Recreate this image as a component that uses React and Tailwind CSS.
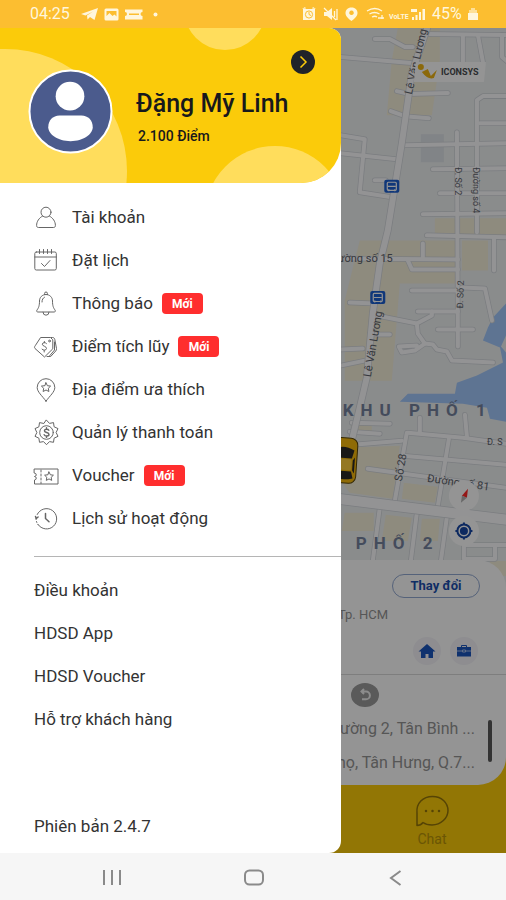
const strokeProps = { fill: 'none', stroke: 'currentColor', strokeLinecap: 'round', strokeLinejoin: 'round' };

function MenuIcon({ children }) {
  return (
    <svg viewBox="0 0 24 24" className="h-6 w-6 shrink-0 overflow-visible text-[#666]" strokeWidth="1" aria-hidden="true" {...strokeProps}>
      {children}
    </svg>
  );
}

const menuItems = [
  {
    label: 'Tài khoản',
    icon: (
      <>
        <circle cx="12" cy="6.2" r="5" />
        <path d="M8.6 10C5 12 2.6 15.500 2.600 19.500c0 1.300.6 2 2 2h14.800c1.400 0 2-.7 2-2 0-4-2.400-7.500-6-9.500" />
      </>
    ),
  },
  {
    label: 'Đặt lịch',
    icon: (
      <>
        <rect x=".8" y="3" width="21.500" height="18" rx="1.500" />
        <path d="M.8 8h21.500M5.500.5v4M9.500.5v4M13.500.5v4M17.500.5v4M7.500 14.500l3 3 5.500-6" />
      </>
    ),
  },
  {
    label: 'Thông báo',
    isNew: true,
    icon: (
      <>
        <path d="M12 2.500c-4 0-6.500 3-6.500 6.500 0 5-1 7-2.500 9-.7 1-.3 2 .8 2h16.400c1.100 0 1.500-1 .8-2-1.500-2-2.500-4-2.500-9 0-3.500-2.500-6.500-6.500-6.500z" />
        <path d="M10.600 2.600V1.400a1.400 1.400 0 0 1 2.800 0v1.200M9 20.200a3 3 0 0 0 6 0M8 10c0-2.500 1-4 2.500-4.800" />
      </>
    ),
  },
  {
    label: 'Điểm tích lũy',
    isNew: true,
    icon: (
      <>
        <path d="M7 2.500h9.500l2.300 2.300v9L10.500 22 1 13.500c-.7-.8-.7-1.600 0-2.500z" />
        <path d="M17 2.500h1.500c1.300 0 2 .7 2.300 2l1.700 9c.2 1-.2 1.800-.8 2.500l-5 5.500-3.700 0M20.500 7v8l-5 6" />
        <path d="M12.500 8.500c-1-1.300-4-1.300-4.200.7-.2 2 4.400 2 4.200 4.300-.2 2-3.500 2.200-4.500.7M10.400 6.500v1.200M10.200 15.500v1.500" />
        <circle cx="15.500" cy="6" r=".9" />
      </>
    ),
  },
  {
    label: 'Địa điểm ưa thích',
    icon: (
      <>
        <path d="M12 23.200C8 17.500 3.200 14 3.200 9.500a8.800 8.800 0 0 1 17.600 0c0 4.500-4.800 8-8.800 13.700z" />
        <path d="M12 4.800l1.400 2.900 3.200.4-2.300 2.200.6 3.200-2.900-1.500-2.900 1.500.6-3.200-2.300-2.200 3.200-.4z" />
      </>
    ),
  },
  {
    label: 'Quản lý thanh toán',
    icon: (
      <>
        <path d="M12.500-.8l3 3.200 4-.8.600 4.200 3.900 1.800-1.900 3.900L24 15.300l-3.900 1.900-.6 4.100-4-.7-3 3.100-3-3.100-4 .7-.6-4.100L1 15.300l1.900-3.800L1 7.600l3.900-1.800.6-4.200 4 .8z" />
        <circle cx="12.500" cy="11.500" r="6.800" />
        <path strokeWidth="1.400" d="M14.800 9.300c-.7-1.500-4.400-1.500-4.400.5 0 2.200 4.600 1.200 4.600 3.600 0 2-4 2.100-4.800.3M12.500 6.800V8M12.500 15v1.400" />
      </>
    ),
  },
  {
    label: 'Voucher',
    isNew: true,
    icon: (
      <>
        <path d="M.5 5h23.500v15H.5v-4a2 2 0 0 0 1.800-2A2 2 0 0 0 .5 12.500 2 2 0 0 0 2.300 11 2 2 0 0 0 .5 9z" />
        <path strokeDasharray="2 2" d="M7 6v13.500" />
        <path d="M15 8l1.400 2.800 3 .4-2.200 2.100.5 3.100-2.700-1.500-2.700 1.500.5-3.100-2.200-2.100 3-.4z" />
      </>
    ),
  },
  {
    label: 'Lịch sử hoạt động',
    icon: (
      <>
        <path d="M3.200 7.500A10.200 10.200 0 1 1 4 17.500" />
        <path strokeDasharray="1 2" d="M2 11.500a10.200 10.200 0 0 0 2 6" />
        <path strokeWidth="1.500" d="M1.500 9.500l.8 2 1.800-1.500M11.500 6.500v5l3.500 3.200" />
      </>
    ),
  },
];

const links = ['Điều khoản', 'HDSD App', 'HDSD Voucher', 'Hỗ trợ khách hàng'];

const roads = [
  'M341 57L411 63', 'M375 39H390L405 47H413', 'M427 34L506 35', 'M463 35V62', 'M478 35L483 62', 'M502 35V57L508 62',
  'M397 91L410 94L448 93', 'M391 111L405 116L429 118', 'M405 145L506 143', 'M477 232V100L483 96H506', 'M480 123H506',
  'M457 132L458 346', 'M341 135L365 139L360 192L392 197', 'M341 153L397 159', 'M375 180H386', 'M433 169L506 168',
  'M440 193H506', 'M423 214L506 213', 'M427 235L506 237', 'M494 238V270', 'M341 258L458 259', 'M423 243V258',
  'M408 260L412 269H458', 'M412 290H457', 'M462 287L485 288L492 320', 'M350 302L375 303', 'M377 315L417 323L432 315V311',
  'M418 311H458', 'M417 323L418 333L425 343L415 350L402 352L399 346L417 345', 'M425 343L433 344L437 349L447 351L452 360L493 362',
  'M438 329H473', 'M341 349L363 348', 'M370 334H390', 'M341 365L365 360', 'M408 432L463 437L506 443', 'M341 445L402 440',
  'M407 432L395 500', 'M403 455L506 464', 'M449 438L438 505', 'M420 417V432', 'M465 414L467 436', 'M368 468L397 472L506 487',
  'M352 422L390 423', 'M350 431L380 433', 'M380 507L373 560', 'M417 512L411 560', 'M447 516L441 560',
  'M506 544H464V558H495V544',
];
const mainRoad = 'M428 26L412 73L402 143L388 230L380 263L373 313L367 377L360 407L352 440';

function Road({ d, width }) {
  return (
    <>
      <path d={d} stroke="#d3d7dc" strokeWidth={width + 1.5} />
      <path d={d} stroke="#fdfdff" strokeWidth={width} />
    </>
  );
}

function BusStop({ x, y }) {
  return (
    <g transform={`translate(${x} ${y})`}>
      <rect x="-7.500" y="-6.500" width="15" height="13" rx="2" fill="#1d5fd0" />
      <rect x="-4.500" y="-4" width="9" height="8" rx="1" fill="none" stroke="#fff" strokeWidth="1.200" />
      <path d="M-4 0H4M-3 5V3M3 5V3" stroke="#fff" strokeWidth="1.200" />
    </g>
  );
}

function CityMap() {
  return (
    <svg viewBox="0 28 506 563" preserveAspectRatio="xMaxYMin slice" className="absolute inset-0 h-full w-full font-[Roboto,sans-serif]" role="img" aria-label="Bản đồ">
      <rect y="28" width="506" height="563" fill="#eef1f2" />
      <g fill="#f5efd9">
        <path d="M398 28H440V60L432 115H387L392 60z" />
        <path d="M360 240H458V283H400L392 380H345V300z" />
        <path d="M435 218H506V236H435zM462 240H488V270H462z" />
        <path d="M341 447L400 445L393 498L350 492L341 480z" />
        <path d="M404 482L438 486L435 502L402 498zM345 512H374V530H342zM386 514L412 517L408 540H382zM422 518H440L438 540H420zM352 424H372V433H350z" />
        <path d="M490 560H506V575H490z" />
      </g>
      <path fill="#dfe3e8" d="M421 134H444V162H421z" />
      <path fill="#a3c8fb" d="M506 303L493 317L488 327L483 340L500 347L503 362L477 375L457 382L455 393L408 393L400 401L463 403L487 407L490 418L506 421V352L501 346L506 335z" />
      <g fill="none" strokeLinecap="round" strokeLinejoin="round">
        {roads.map((d) => <path key={d} d={d} stroke="#d3d7dc" strokeWidth="5.500" />)}
        {roads.map((d) => <path key={d} d={d} stroke="#fdfdff" strokeWidth="4" />)}
        <Road d={mainRoad} width={6} />
        <Road d="M330 497L516 520" width={10} />
      </g>

      <g fill="#5e636b" fontSize="11">
        <text transform="translate(412 95) rotate(-77)">Lê Văn Lương</text>
        <text transform="translate(371 377) rotate(-80)">Lê Văn Lương</text>
        <text transform="translate(455 167) rotate(90)" fontSize="9">Đ. Số 2</text>
        <text transform="translate(473 167) rotate(90)" fontSize="9">Đường số 4</text>
        <text transform="translate(463 308) rotate(-88)" fontSize="9">Đ. Số 2</text>
        <text x="393" y="262" textAnchor="end">Đường số 15</text>
        <text transform="translate(402 481) rotate(-80)">Số 28</text>
        <text transform="translate(427 481) rotate(8)">Đường số 81</text>
        <text x="487" y="444" fontSize="9">Đ. S</text>
      </g>
      <g fill="#76839f" fontSize="17" fontWeight="700" className="tracking-[7px]">
        <text x="343" y="415">KHU PHỐ 1</text>
        <text x="356" y="548">PHỐ 2</text>
      </g>

      <BusStop x={392} y={186} />
      <BusStop x={378} y={297} />

      <g transform="translate(343 460) rotate(4)">
        <rect x="-13" y="-23" width="27" height="45" rx="7" fill="#f6b90c" stroke="#5b4608" strokeWidth="1" />
        <path d="M-10-11Q0-17 11-11L9-3H-8z" fill="#2c2a26" />
        <path d="M-8 10H9L11 17Q0 20-10 17zM10-1L12-4V12L10 9z" fill="#2c2a26" />
        <rect x="-8" y="-2" width="17" height="11" rx="2" fill="#ffcf3e" />
      </g>

      <path d="M416 62H486L484 82H414z" fill="#fff" />
      <g fill="#efb514">
        <circle cx="421" cy="67" r="3" />
        <path d="M422 72L428 69L431 76L437 70L434 78Q428 80 422 72z" />
      </g>
      <text x="441" y="75" fontSize="9" fontWeight="700" fill="#4a4c50">ICONSYS</text>

      <circle cx="464" cy="495" r="15" fill="#fff" />
      <path d="M468 488L462 495L467 497z" fill="#ff2a2a" />
      <path d="M462 495L467 497L461 502z" fill="#b4b4b4" />
      <circle cx="464" cy="530" r="15" fill="#fff" />
      <g fill="none" stroke="#1747a6" strokeWidth="2">
        <circle cx="464" cy="530" r="6.500" />
        <circle cx="464" cy="530" r="3" fill="#1747a6" />
        <path d="M464 521.500V524M464 536V538.500M455.500 530H458M470 530H472.500" />
      </g>
    </svg>
  );
}

function StatusBar() {
  return (
    <div className="flex h-7 items-center bg-[#fcbe30] pr-7 pl-[30px] text-base text-[#fff6dc]">
      <span className="w-[45px]">04:25</span>
      <svg viewBox="0 0 80 16" className="ml-[6px] h-4 w-20" fill="currentColor" aria-hidden="true">
        <path d="M0 8L17 2L13.500 14L9 11L6.500 13.500L6 9.500L12 5.500L4.500 9.500z" />
        <path fillRule="evenodd" d="M25 2.500h11a1.500 1.500 0 0 1 1.500 1.500v9a1.500 1.500 0 0 1-1.500 1.500H25a1.500 1.500 0 0 1-1.500-1.500V4A1.500 1.500 0 0 1 25 2.500zM25.500 5v5l3-3 3 3 2-1.500 2 2V5z" />
        <path fillRule="evenodd" d="M44 3.500h17.500v2.500a2 2 0 0 0 0 4v3.500H44V10a2 2 0 0 0 0-4zM48 7.500v1.500h10V7.500z" />
        <circle cx="74.500" cy="8.500" r="2" />
      </svg>
      <svg viewBox="0 0 126 16" className="ml-auto h-4 w-[126px]" fill="currentColor" aria-hidden="true">
        <path d="M1 3h12v11H1zM0 3l3-2 1 1.500zM14 3l-3-2-1 1.500z" />
        <circle cx="7" cy="8.500" r="3.600" fill="none" stroke="#fcbe30" />
        <path d="M7 6v2.500l2 1" fill="none" stroke="#fcbe30" />
        <path d="M22 6h3l5-4v12l-5-4h-3z" />
        <path d="M22 2l12 12M32.500 5v6M35 3v11" fill="none" stroke="currentColor" strokeWidth="1.300" />
        <path fillRule="evenodd" d="M49.500 1.500c4 0 6 2.500 6 5.500 0 3.500-3.500 6-6 8-2.500-2-6-4.500-6-8 0-3 2-5.500 6-5.500zm0 3a2.300 2.300 0 1 0 .01 0z" />
        <path d="M65 5q8-5 15 0M67.500 8q5-3 10 0M70 11q3-1.500 5 0M76 12h6M80 9v4" fill="none" stroke="currentColor" strokeWidth="1.300" />
        <text x="87" y="13" fontSize="7" fontWeight="700">VoLTE</text>
        <path d="M110 14v-3h2v3zM113.500 14V9h2v5zM117 14V6h2v8zM120.500 14V3h2.500v11zM109 3h6v3h-6z" />
      </svg>
      <span className="ml-1 w-[33px]">45%</span>
      <svg viewBox="0 0 10 14" className="ml-[3px] h-[14px] w-[10px]" fill="currentColor" aria-hidden="true">
        <path d="M3 1h4v2h2v3H1V3h2z" opacity=".6" />
        <path d="M0 6h10v7H0z" />
      </svg>
    </div>
  );
}

function BookingScreen() {
  return (
    <div className="col-start-1 row-start-1 flex flex-col">
      <div className="relative -mb-8 grow">
        <CityMap />
      </div>
      <section className="relative z-10 rounded-r-[28px] bg-white text-base text-[#949494]">
        <div className="flex justify-end pt-[14px] pr-[26px]">
          <button className="h-6 w-[88px] rounded-full border border-[#93a9d2] text-[13px] leading-5 font-bold text-[#1a4fae]">Thay đổi</button>
        </div>
        <p className="pt-[7px] pr-[118px] text-right text-[13px] leading-5">Quận 7, Tp. HCM</p>
        <div className="flex justify-end gap-[9px] pt-3 pr-7 pb-[9px]">
          <button aria-label="Nhà" className="flex h-7 w-7 items-center justify-center rounded-full bg-[#f4f3f9]">
            <svg viewBox="0 0 18 16" className="h-4 w-[18px]" fill="#1b55bd"><path d="M9 1L17.500 8.500H15V15h-4.500v-4h-3v4H3V8.500H.5z" /></svg>
          </button>
          <button aria-label="Công ty" className="flex h-7 w-7 items-center justify-center rounded-full bg-[#f4f3f9]">
            <svg viewBox="0 0 16 14" className="h-[14px] w-4" fill="#1b55bd">
              <path d="M1 3h14v9.500H1z" />
              <path d="M5.500 3V1.500h5V3" fill="none" stroke="#1b55bd" />
              <path d="M1 7h5.500M9.500 7H15M6.500 6v2h3V6z" fill="none" stroke="#a9bfe8" />
            </svg>
          </button>
        </div>
        <div className="flex justify-end border-t border-[#d9d9d9] pt-2 pr-[127px]">
          <button aria-label="Đảo chiều" className="flex h-6 w-7 items-center justify-center rounded-[50%] bg-[#9b9b9b]">
            <svg viewBox="0 0 14 14" className="h-[14px] w-[14px]" stroke="#f2f2f2" strokeWidth="2" fill="none"><path d="M6 1L3.500 3.500L6 6M4 3.500h4a3.800 3.800 0 0 1 0 7.800H4" /></svg>
          </button>
        </div>
        <div className="flex items-start justify-end gap-[13px] pt-[5px] pr-[14px] pb-[5px]">
          <div className="text-right leading-[34px] whitespace-nowrap">
            <p>Đường số 15, Phường 2, Tân Bình ...</p>
            <p>Lê Văn Thọ, Tân Hưng, Q.7...</p>
          </div>
          <span className="mt-2 h-[42px] w-1 rounded-full bg-[#595959]" />
        </div>
      </section>
      <nav className="-mt-8 flex justify-end bg-[#fbcb0a] pt-[42px] pr-14 pb-[5px]">
        <a href="#chat" className="flex w-9 flex-col items-center text-sm leading-[18px] text-[#b8940a]">
          <svg viewBox="0 0 34 32" className="h-8 w-[34px] text-[#94750a]" strokeWidth="1.500" {...strokeProps}>
            <path d="M2 30.500V18C1 8 8 1.500 17.500 1.500S33 8 33 15.500 26 30 17 30c-4 0-7-1-9-2.500-1.500 2-3.500 3-6 3z" />
            <path d="M11 16h.01M17.500 16h.01M24 16h.01" strokeWidth="2.500" />
          </svg>
          <span className="pt-[3px]">Chat</span>
        </a>
      </nav>
    </div>
  );
}

function Drawer() {
  return (
    <aside className="z-20 col-start-1 row-start-1 flex w-[341px] max-w-[85%] flex-col overflow-hidden rounded-r-xl bg-white">
      <header className="relative flex min-h-[155px] gap-[23px] overflow-hidden rounded-br-[40px] bg-[#fbcb0a] pr-[26px] pl-7">
        <svg viewBox="0 0 341 155" className="absolute inset-0 h-full w-full" fill="#ffdd5c" aria-hidden="true">
          <circle cx="5" cy="143" r="122" />
          <circle cx="225" cy="-19" r="41" />
          <circle cx="275" cy="188" r="70" />
        </svg>
        <svg viewBox="0 0 86 86" className="relative mt-[41px] h-[85px] w-[85px] shrink-0" role="img" aria-label="Ảnh đại diện">
          <circle cx="43" cy="43" r="41.500" fill="#4b5b8d" stroke="#fff" strokeWidth="2" />
          <circle cx="42.500" cy="27.500" r="14.500" fill="#fff" />
          <path d="M32 47H54C61 47 65.500 52 65.500 59C65.500 66 56 73 43 73S20.500 66 20.500 59C20.500 52 25 47 32 47z" fill="#fff" />
        </svg>
        <div className="relative flex grow flex-col pt-[22px] whitespace-nowrap text-[#17181c]">
          <button aria-label="Xem hồ sơ" className="flex h-6 w-6 items-center justify-center self-end rounded-full bg-[#202329]">
            <svg viewBox="0 0 12 12" className="h-3 w-3" fill="none" stroke="#fbcb0a" strokeWidth="1.500"><path d="M3.500 0.500L9 6L3.500 11.500" /></svg>
          </button>
          <h1 className="mt-3 text-[25px] leading-9 font-medium">Đặng Mỹ Linh</h1>
          <p className="mt-1 pl-[2px] text-sm leading-5 font-medium">2.100 Điểm</p>
        </div>
      </header>

      <nav className="pt-[13px] text-[17px] text-[#333]">
        <ul>
          {menuItems.map((item) => (
            <li key={item.label}>
              <a href="#menu" className="flex h-[43px] items-center pl-[34px]">
                <MenuIcon>{item.icon}</MenuIcon>
                <span className="ml-[14px]">{item.label}</span>
                {item.isNew && <span className="ml-[9px] flex h-[21px] w-[41px] items-center justify-center rounded bg-[#ff2e2e] text-xs font-bold text-white">Mới</span>}
              </a>
            </li>
          ))}
        </ul>
        <hr className="mt-4 ml-[34px] border-[#b5b5b5]" />
        <ul className="pt-3">
          {links.map((label) => (
            <li key={label}>
              <a href="#info" className="flex h-[43px] items-center pl-[34px]">{label}</a>
            </li>
          ))}
        </ul>
      </nav>
      <p className="mt-auto pb-[15px] pl-[34px] text-[17px] leading-6 text-[#333]">Phiên bản 2.4.7</p>
    </aside>
  );
}

const systemButtons = [
  { label: 'Gần đây', shape: <path d="M4 4v15M12 4v15M20 4v15" /> },
  { label: 'Trang chủ', shape: <rect x="3" y="4.500" width="18" height="14" rx="4.500" /> },
  { label: 'Quay lại', shape: <path d="M16.500 5L7 12l9.500 7" /> },
];

function SystemNav() {
  return (
    <nav className="grid h-[47px] grid-cols-3 bg-[#f6f6f6] px-10 text-[#8a8a8a]">
      {systemButtons.map((b) => (
        <button key={b.label} aria-label={b.label} className="flex items-center justify-center">
          <svg viewBox="0 0 22 22" className="h-[22px] w-[22px]" fill="none" stroke="currentColor" strokeWidth="2">{b.shape}</svg>
        </button>
      ))}
    </nav>
  );
}

export default function App() {
  return (
    <div className="flex min-h-screen flex-col bg-white font-[Roboto,sans-serif]">
      <StatusBar />
      <main className="grid grow grid-cols-1">
        <BookingScreen />
        <div className="z-10 col-start-1 row-start-1 bg-black/42" />
        <Drawer />
      </main>
      <SystemNav />
    </div>
  );
}
